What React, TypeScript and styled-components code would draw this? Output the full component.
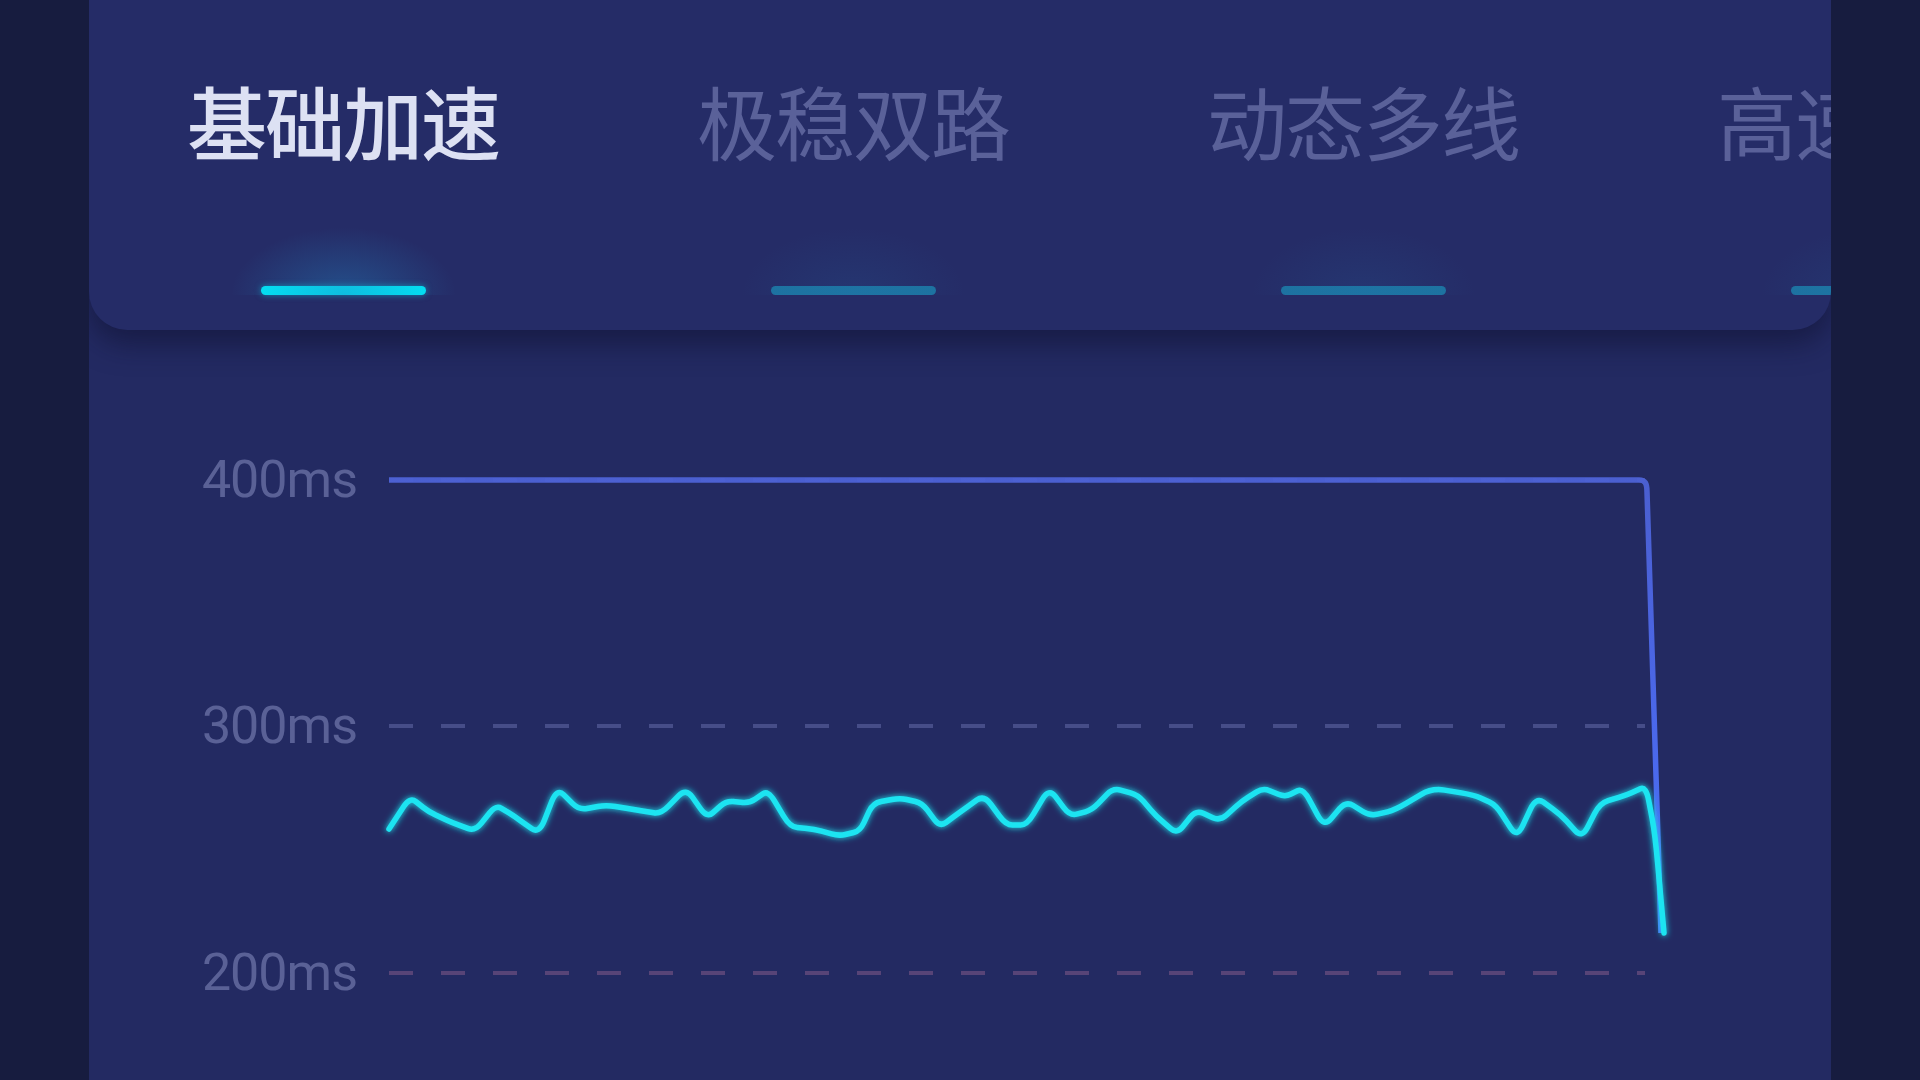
import styled, { createGlobalStyle } from "styled-components";

const GlobalStyle = createGlobalStyle`
  html, body {
    margin: 0;
    padding: 0;
    background: #171c3f;
    overflow: hidden;
  }
`;

const tabs = ["基础加速", "极稳双路", "动态多线", "高速专线"];

// measured latency samples (x, y) in chart space
const latency: [number, number][] = [
  [300, 499], [321, 467], [340, 482], [364, 493], [386, 501], [407, 475],
  [425, 486], [450, 504], [468, 458], [490, 480], [517, 475], [548, 480],
  [572, 484], [597, 458], [618, 488], [637, 471], [661, 473], [679, 460],
  [701, 497], [725, 499], [750, 506], [771, 501], [784, 473], [811, 468],
  [833, 473], [851, 497], [871, 482], [895, 465], [917, 495], [938, 495],
  [960, 458], [981, 486], [1003, 480], [1024, 458], [1049, 465], [1067, 486],
  [1088, 504], [1107, 480], [1131, 491], [1153, 471], [1174, 458], [1196, 467],
  [1214, 458], [1235, 497], [1257, 471], [1281, 486], [1306, 480], [1343, 458],
  [1385, 465], [1407, 475], [1428, 508], [1447, 467], [1471, 484], [1493, 508],
  [1511, 473], [1538, 465], [1557, 456], [1566, 504], [1575, 603],
];

const gridLines = [
  { label: "400ms", y: 150, color: "#434c8e" },
  { label: "300ms", y: 396, color: "#464d88" },
  { label: "200ms", y: 643, color: "#574477" },
];

// rounds each corner of the sample line by a short stretch only
const roundedPath = (pts: [number, number][], r = 0.3) => {
  let d = `M${pts[0][0]},${pts[0][1]}`;
  for (let i = 1; i < pts.length - 1; i++) {
    const [px, py] = pts[i - 1];
    const [x, y] = pts[i];
    const [nx, ny] = pts[i + 1];
    const ax = x + (px - x) * r;
    const ay = y + (py - y) * r;
    const bx = x + (nx - x) * r;
    const by = y + (ny - y) * r;
    d += ` L${ax},${ay} Q${x},${y} ${bx},${by}`;
  }
  const last = pts[pts.length - 1];
  return d + ` L${last[0]},${last[1]}`;
};

const Page = styled.div`
  display: flex;
  width: 1920px;
  height: 1080px;
`;

const Gutter = styled.div`
  width: 89px;
  flex-shrink: 0;
  background: #171c3f;
`;

const Main = styled.main`
  flex: 1;
  display: flex;
  flex-direction: column;
  background: #232a62;
  overflow: hidden;
`;

const TabCard = styled.nav`
  height: 330px;
  flex-shrink: 0;
  box-sizing: border-box;
  display: flex;
  padding: 71px 0 0 97px;
  gap: 196px;
  background: #252c67;
  border-radius: 0 0 38px 38px;
  box-shadow: 0 14px 28px rgba(14, 17, 48, 0.55);
  position: relative;
  z-index: 1;
  overflow: hidden;
`;

const Tab = styled.div`
  display: flex;
  flex-direction: column;
  align-items: center;
  flex-shrink: 0;
  width: 314px;
`;

const TabLabel = styled.span<{ $active?: boolean }>`
  font-family: "Noto Sans CJK SC", "Noto Sans", sans-serif;
  font-size: 80px;
  line-height: 96px;
  white-space: nowrap;
  letter-spacing: -2px;
  font-weight: ${(p) => (p.$active ? 500 : 400)};
  color: ${(p) => (p.$active ? "#dde1f3" : "#5a6199")};
`;

const Indicator = styled.span<{ $active?: boolean }>`
  position: relative;
  margin-top: 119px;
  width: 165px;
  height: 9px;
  border-radius: 5px;
  background: ${(p) => (p.$active ? "#00e8f7" : "#1d72a0")};
  box-shadow: ${(p) =>
    p.$active ? "0 0 6px rgba(0, 232, 247, 0.5)" : "none"};

  &::before {
    content: "";
    position: absolute;
    left: -30px;
    right: -30px;
    bottom: 0;
    height: 90px;
    background: radial-gradient(
      ellipse 50% 75% at 50% 100%,
      rgba(35, 130, 190, ${(p) => (p.$active ? 0.42 : 0.12)}),
      rgba(35, 130, 190, 0)
    );
    pointer-events: none;
  }
`;

const Chart = styled.svg`
  display: block;
  width: 1742px;
  height: 750px;
  flex-shrink: 0;
`;

const AxisLabel = styled.text`
  font-family: Roboto, "Liberation Sans", sans-serif;
  font-size: 52px;
  letter-spacing: -1px;
  fill: #5a6196;
`;

export default function App() {
  return (
    <>
      <GlobalStyle />
      <Page>
        <Gutter />
        <Main>
          <TabCard>
            {tabs.map((t, i) => (
              <Tab key={t}>
                <TabLabel $active={i === 0}>{t}</TabLabel>
                <Indicator $active={i === 0} />
              </Tab>
            ))}
          </TabCard>
          <Chart viewBox="0 0 1742 750">
            <defs>
              <filter id="glow" x="-10%" y="-50%" width="120%" height="200%">
                <feGaussianBlur stdDeviation="3" result="b" />
                <feMerge>
                  <feMergeNode in="b" />
                  <feMergeNode in="SourceGraphic" />
                </feMerge>
              </filter>
              <linearGradient id="blueDrop" x1="0" y1="0" x2="0" y2="1">
                <stop offset="0" stopColor="#4d62d6" />
                <stop offset="0.6" stopColor="#4d6cf4" />
                <stop offset="1" stopColor="#4a72ff" />
              </linearGradient>
            </defs>
            {gridLines.map((g) => (
              <g key={g.label}>
                <AxisLabel x={268} y={g.y + 17} textAnchor="end">
                  {g.label}
                </AxisLabel>
                <line
                  x1={300}
                  x2={1556}
                  y1={g.y}
                  y2={g.y}
                  stroke={g.color}
                  strokeWidth={4}
                  strokeDasharray="24 28"
                />
              </g>
            ))}
            <path
              d="M300,150 L1550,150 C1556,150 1558,153 1558,162 L1572,603"
              fill="none"
              stroke="url(#blueDrop)"
              strokeOpacity={0.95}
              strokeWidth={5.5}
              strokeLinejoin="round"
            />
            <path
              d={roundedPath(latency)}
              fill="none"
              stroke="#1ee4f1"
              strokeWidth={5.5}
              strokeLinejoin="round"
              strokeLinecap="round"
              filter="url(#glow)"
            />
          </Chart>
        </Main>
        <Gutter />
      </Page>
    </>
  );
}
